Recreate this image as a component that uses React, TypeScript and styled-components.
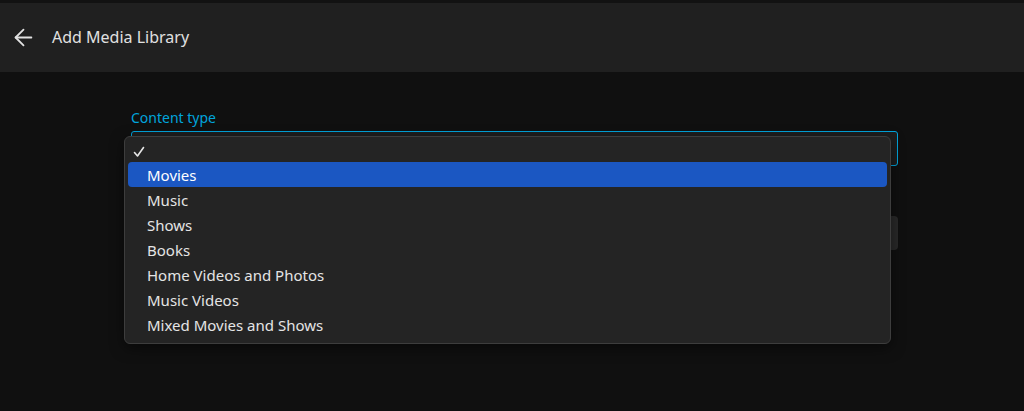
import React from "react";
import styled, { createGlobalStyle } from "styled-components";

const Global = createGlobalStyle`
  html, body { margin: 0; padding: 0; background: #101010; }
  body { font-family: "Noto Sans", "Liberation Sans", sans-serif; }
  * { box-sizing: border-box; }
`;

const Page = styled.div`
  width: 1024px;
  height: 411px;
  background: #101010;
  position: relative;
  overflow: hidden;
`;

const Header = styled.header`
  height: 72px;
  border-top: 3px solid #121212;
  background: #202020;
  display: flex;
  align-items: center;
  padding-left: 10px;
  gap: 15px;
  color: #e2e2e2;
`;

const BackButton = styled.button`
  background: none;
  border: none;
  padding: 0;
  display: flex;
  color: #e2e2e2;
  margin-top: -1px;
`;

const Title = styled.h1`
  margin: 0 0 2px 0;
  font-size: 16px;
  font-weight: 400;
  color: #e0e0e0;
  line-height: 1;
`;

const Main = styled.main`
  padding: 37px 0 0 131px;
  width: 898px;
  display: flex;
  flex-direction: column;
`;

const Label = styled.label`
  font-size: 14px;
  color: #00a4dc;
  line-height: 18px;
  height: 22px;
`;

const SelectBox = styled.div`
  height: 35px;
  border: 1px solid #00a4dc;
  border-radius: 3px;
  background: #1e1e1e;
`;

const SecondField = styled.div`
  margin-top: 50px;
  height: 34px;
  border-radius: 4px;
  background: #292929;
`;

const Menu = styled.ul`
  position: absolute;
  left: 124px;
  top: 136px;
  width: 767px;
  height: 208px;
  margin: 0;
  padding: 1px 3px 6px;
  list-style: none;
  background: #242424;
  border: 1px solid #3d3d3d;
  border-radius: 6px;
  box-shadow: 0 4px 14px rgba(0, 0, 0, 0.5);
`;

const Item = styled.li<{ $active?: boolean }>`
  height: 25px;
  display: flex;
  align-items: center;
  padding-left: 19px;
  border-radius: 4px;
  font-size: 15px;
  color: ${(p) => (p.$active ? "#ffffff" : "#e4e4e4")};
  background: ${(p) => (p.$active ? "#1b57c2" : "transparent")};
`;

const CheckRow = styled.li`
  height: 24px;
  display: flex;
  align-items: center;
  padding: 4px 0 0 5px;
`;

const items = [
  "Movies",
  "Music",
  "Shows",
  "Books",
  "Home Videos and Photos",
  "Music Videos",
  "Mixed Movies and Shows",
];

export default function App() {
  return (
    <Page>
      <Global />
      <Header>
        <BackButton aria-label="Back">
          <svg width="27" height="27" viewBox="0 0 24 24" fill="none" stroke="currentColor" strokeWidth="1.6" strokeLinecap="round" strokeLinejoin="round">
            <path d="M19 12H5" />
            <path d="M12 19l-7-7 7-7" />
          </svg>
        </BackButton>
        <Title>Add Media Library</Title>
      </Header>
      <Main>
        <Label>Content type</Label>
        <SelectBox />
        <SecondField />
      </Main>
      <Menu>
        <CheckRow>
          <svg width="12" height="12" viewBox="0 0 12 12" fill="none" stroke="#e6e6e6" strokeWidth="1.6" strokeLinecap="round" strokeLinejoin="round">
            <path d="M1.5 6.5L4.5 10L10.5 1.5" />
          </svg>
        </CheckRow>
        {items.map((t, i) => (
          <Item key={t} $active={i === 0}>
            {t}
          </Item>
        ))}
      </Menu>
    </Page>
  );
}
